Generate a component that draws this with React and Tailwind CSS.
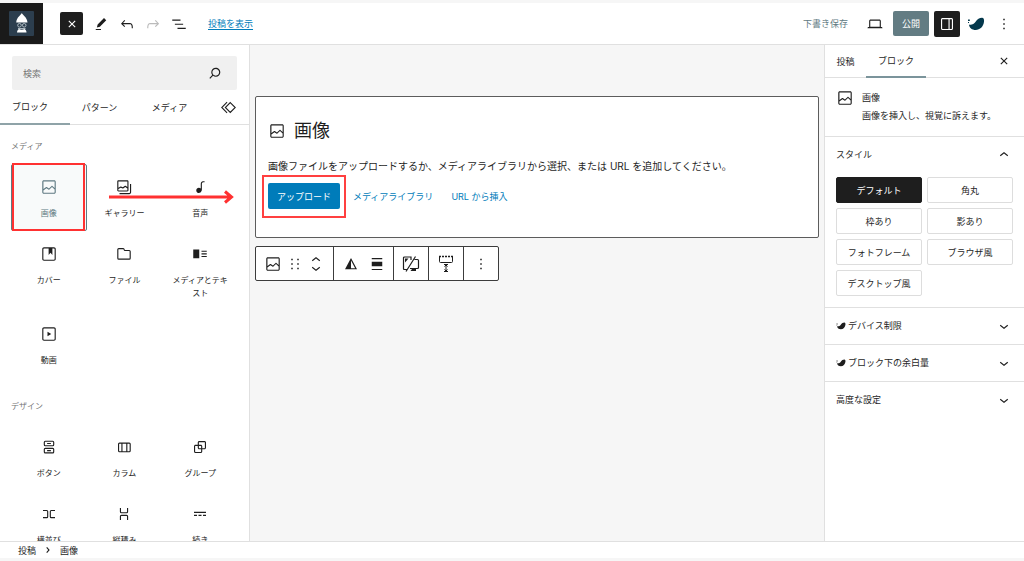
import React from 'react';

const ICONS = {
  image: 'M19 3H5c-1.1 0-2 .9-2 2v14c0 1.1.9 2 2 2h14c1.1 0 2-.9 2-2V5c0-1.1-.9-2-2-2zM5 4.5h14c.3 0 .5.2.5.5v8.4l-3-2.9c-.3-.3-.8-.3-1 0L11.9 14 9 12c-.3-.2-.6-.2-.8 0l-3.6 2.6V5c-.1-.3.1-.5.4-.5zm14 15H5c-.3 0-.5-.2-.5-.5v-2.4l4.1-3 3 1.9c.3.2.7.2.9-.1L16 12l3.5 3.4V19c0 .3-.2.5-.5.5z',
  gallery: 'M16.375 4.5H4.625a.125.125 0 0 0-.125.125v8.254l2.859-1.54a.75.75 0 0 1 .68-.016l2.384 1.142 2.89-2.074a.75.75 0 0 1 .874 0l2.313 1.66V4.625a.125.125 0 0 0-.125-.125Zm.125 9.398-2.75-1.975-2.813 2.02a.75.75 0 0 1-.76.067l-2.444-1.17L4.5 14.583v1.792c0 .069.056.125.125.125h11.75a.125.125 0 0 0 .125-.125v-2.477ZM4.625 3C3.728 3 3 3.728 3 4.625v11.75C3 17.273 3.728 18 4.625 18h11.75c.898 0 1.625-.727 1.625-1.625V4.625C18 3.728 17.273 3 16.375 3H4.625ZM20 8v11c0 .69-.31 1-.999 1H6v1.5h13.001c1.52 0 2.499-.982 2.499-2.5V8H20Z',
  audio: 'M17.7 4.3c-1.2 0-2.8 0-3.8 1-.6.6-.9 1.5-.9 2.6V14c-.6-.6-1.5-1-2.5-1C8.6 13 7 14.6 7 16.5S8.6 20 10.5 20c1.5 0 2.8-1 3.3-2.3.5-.8.7-1.8.7-2.5V7.9c0-.7.2-1.2.5-1.6.6-.6 1.8-.6 2.8-.6h.3V4.3h-.4z',
  cover: 'M18.7 3H5.3C4 3 3 4 3 5.3v13.4C3 20 4 21 5.3 21h13.4c1.3 0 2.3-1 2.3-2.3V5.3C21 4 20 3 18.7 3zm.8 15.7c0 .4-.4.8-.8.8H5.3c-.4 0-.8-.4-.8-.8V5.3c0-.4.4-.8.8-.8h6.2v8.9l2.5-3.1 2.5 3.1V4.5h2.2c.4 0 .8.4.8.8v13.4z',
  file: 'M12.848 8a1 1 0 0 1-.914-.594l-.723-1.63a.5.5 0 0 0-.447-.276H5a.5.5 0 0 0-.5.5v11.5a.5.5 0 0 0 .5.5h14a.5.5 0 0 0 .5-.5v-9A.5.5 0 0 0 19 8h-6.152Zm.612-1.5a.5.5 0 0 1-.462-.31l-.445-1.084A2 2 0 0 0 10.763 4H5a2 2 0 0 0-2 2v11.5a2 2 0 0 0 2 2h14a2 2 0 0 0 2-2v-9a2 2 0 0 0-2-2h-5.54Z',
  mediaText: 'M3 6v11.5h8V6H3Zm11 3h7V7.5h-7V9Zm7 3.5h-7V11h7v1.5ZM14 16h7v-1.5h-7V16Z',
  video: 'M18.7 3H5.3C4 3 3 4 3 5.3v13.4C3 20 4 21 5.3 21h13.4c1.3 0 2.3-1 2.3-2.3V5.3C21 4 20 3 18.7 3zm.8 15.7c0 .4-.4.8-.8.8H5.3c-.4 0-.8-.4-.8-.8V5.3c0-.4.4-.8.8-.8h13.4c.4 0 .8.4.8.8v13.4zM10 15l5-3-5-3v6z',
  buttons: 'M14.5 17.5h-5V16h5v1.5zM14.5 8h-5V6.5h5V8zM7 3.5h10a2 2 0 0 1 2 2V9a2 2 0 0 1-2 2H7a2 2 0 0 1-2-2V5.5a2 2 0 0 1 2-2zM17 5H7a.5.5 0 0 0-.5.5V9a.5.5 0 0 0 .5.5h10a.5.5 0 0 0 .5-.5V5.5A.5.5 0 0 0 17 5zM7 13h10a2 2 0 0 1 2 2v3.5a2 2 0 0 1-2 2H7a2 2 0 0 1-2-2V15a2 2 0 0 1 2-2zm10 1.5H7a.5.5 0 0 0-.5.5v3.5a.5.5 0 0 0 .5.5h10a.5.5 0 0 0 .5-.5V15a.5.5 0 0 0-.5-.5z',
  columns: 'M15 7.5h-5v10h5v-10Zm1.5 0v10H19a.5.5 0 0 0 .5-.5V8a.5.5 0 0 0-.5-.5h-2.5ZM6 7.5h2.5v10H6a.5.5 0 0 1-.5-.5V8a.5.5 0 0 1 .5-.5ZM6 6h13a2 2 0 0 1 2 2v9a2 2 0 0 1-2 2H6a2 2 0 0 1-2-2V8a2 2 0 0 1 2-2Z',
  group: 'M18 4h-7c-1.1 0-2 .9-2 2v3H6c-1.1 0-2 .9-2 2v7c0 1.1.9 2 2 2h7c1.1 0 2-.9 2-2v-3h3c1.1 0 2-.9 2-2V6c0-1.1-.9-2-2-2zm-4.5 14c0 .3-.2.5-.5.5H6c-.3 0-.5-.2-.5-.5v-7c0-.3.2-.5.5-.5h3V13c0 1.1.9 2 2 2h2.5v3zm0-4.5H11c-.3 0-.5-.2-.5-.5v-2.5H13c.3 0 .5.2.5.5v2.5zm5-.5c0 .3-.2.5-.5.5h-3V11c0-1.1-.9-2-2-2h-2.5V6c0-.3.2-.5.5-.5h7c.3 0 .5.2.5.5v7z',
  row: 'M4 6.5h5a2 2 0 0 1 2 2v7a2 2 0 0 1-2 2H4V16h5a.5.5 0 0 0 .5-.5v-7A.5.5 0 0 0 9 8H4V6.5Zm16 0h-5a2 2 0 0 0-2 2v7a2 2 0 0 0 2 2h5V16h-5a.5.5 0 0 1-.5-.5v-7A.5.5 0 0 1 15 8h5V6.5Z',
  stack: 'M17.5 4v5a2 2 0 0 1-2 2h-7a2 2 0 0 1-2-2V4H8v5a.5.5 0 0 0 .5.5h7A.5.5 0 0 0 16 9V4h1.5Zm0 16v-5a2 2 0 0 0-2-2h-7a2 2 0 0 0-2 2v5H8v-5a.5.5 0 0 1 .5-.5h7a.5.5 0 0 1 .5.5v5h1.5Z',
  more: 'M4 9v1.5h16V9H4zm12 5.5h4V13h-4v1.5zm-6 0h4V13h-4v1.5zm-6 0h4V13H4v1.5z',
  edit: 'm19 7-3-3-8.5 8.5-1 4 4-1L19 7Zm-7 11.5H5V20h7v-1.5Z',
  undo: 'M18.3 11.7c-.6-.6-1.4-.9-2.3-.9H6.7l2.9-3.3-1.1-1-4.5 5L8.5 16l1-1-2.7-2.7H16c.5 0 .9.2 1.3.5 1 1 1 3.4 1 4.5v.3h1.5v-.2c0-1.5 0-4.3-1.5-5.7z',
  redo: 'M15.6 6.5l-1.1 1 2.9 3.3H8c-.9 0-1.7.3-2.3.9-1.4 1.5-1.4 4.2-1.4 5.6v.2h1.5v-.3c0-1.1 0-3.5 1-4.5.3-.3.7-.5 1.3-.5h9.2L14.5 15l1.1 1.1 4.6-4.6-4.6-5z',
  listView: 'M3 6h11v1.5H3V6Zm3.5 5.5h11V13h-11v-1.5ZM21 17H10v1.5h11V17Z',
  close: 'M12 13.06l3.712 3.713 1.061-1.06L13.061 12l3.712-3.712-1.06-1.06L12 10.938 8.288 7.227l-1.061 1.06L10.939 12l-3.712 3.712 1.06 1.061L12 13.061z',
  laptop: 'M20.5 16h-.7V8c0-1.1-.9-2-2-2H6.2c-1.1 0-2 .9-2 2v8h-.7c-.8 0-1.5.7-1.5 1.5h20c0-.8-.7-1.5-1.5-1.5zM5.7 8c0-.3.2-.5.5-.5h11.6c.3 0 .5.2.5.5v7.6H5.7V8z',
  drawer: 'M18 4H6c-1.1 0-2 .9-2 2v12c0 1.1.9 2 2 2h12c1.1 0 2-.9 2-2V6c0-1.1-.9-2-2-2zm-4 14.5H6c-.3 0-.5-.2-.5-.5V6c0-.3.2-.5.5-.5h8v13zm4.5-.5c0 .3-.2.5-.5.5h-2.5v-13H18c.3 0 .5.2.5.5v12z',
  dots: 'M13 19h-2v-2h2v2zm0-6h-2v-2h2v2zm0-6h-2V5h2v2z',
  search: 'M13 5c-3.3 0-6 2.7-6 6 0 1.4.5 2.7 1.3 3.7l-3.8 3.8 1.1 1.1 3.8-3.8c1 .8 2.3 1.3 3.7 1.3 3.3 0 6-2.7 6-6S16.3 5 13 5zm0 10.5c-2.5 0-4.5-2-4.5-4.5s2-4.5 4.5-4.5 4.5 2 4.5 4.5-2 4.5-4.5 4.5z',
  drag: 'M7 7h2V5H7v2zm0 6h2v-2H7v2zm0 6h2v-2H7v2zm8-14v2h2V5h-2zm0 8h2v-2h-2v2zm0 6h2v-2h-2v2z',
  align: 'M19 5.5H5V4h14v1.5ZM19 20H5v-1.5h14V20ZM5 9h14v6H5V9Z',
  up: 'M6.5 12.4L12 8l5.5 4.4-.9 1.2L12 10l-4.5 3.6-1-1.2z',
  down: 'M17.5 11.6L12 16l-5.5-4.4.9-1.2L12 14l4.5-3.6 1 1.2z',
  right: 'M10.8 8l3.5 4-3.5 4-1.1-1 2.6-3-2.6-3 1.1-1z',
  duotone: 'M12 4 4 19h16L12 4zm0 3.2 5.5 10.3H12V7.2z',
};

const Icon = ({ name, className = '' }) => (
  <svg viewBox="0 0 24 24" className={`size-[18px] shrink-0 fill-current ${className}`} fillRule="evenodd" aria-hidden="true">
    <path d={ICONS[name]} />
  </svg>
);

const Whale = ({ className }) => (
  <svg viewBox="0 0 18 14" className={`shrink-0 fill-current ${className}`} aria-hidden="true">
    <path d="M2 7.500c2.500.6 5-.4 6.600-2.800C10.300 2 12.500.8 15 .8c1.800 0 2.300 1.800 2 4-.6 4.800-4 8.200-8.300 8.200C5 13 2.200 10.800 2 7.500z" />
    <path d="M1 2.500h1.800v1.600H1zM1 5h1v1H1z" />
  </svg>
);

const media = [
  ['image', '画像'],
  ['gallery', 'ギャラリー'],
  ['audio', '音声'],
  ['cover', 'カバー'],
  ['file', 'ファイル'],
  ['mediaText', 'メディアとテキスト'],
  ['video', '動画'],
];

const design = [
  ['buttons', 'ボタン'],
  ['columns', 'カラム'],
  ['group', 'グループ'],
  ['row', '横並び'],
  ['stack', '縦積み'],
  ['more', '続き'],
];

const styles = ['デフォルト', '角丸', '枠あり', '影あり', 'フォトフレーム', 'ブラウザ風', 'デスクトップ風'];

const Tile = ({ icon, label, active }) => (
  <button
    type="button"
    className={`flex h-[67px] flex-col items-center px-2 pt-[14px] ${
      active ? 'rounded-xs bg-[#f8fafa] text-[#5f7a82] outline-1 -outline-offset-1 outline-[#5f7a82]' : ''
    }`}
  >
    <Icon name={icon} />
    <span className="mt-[11px] text-[8px] leading-[13px]">{label}</span>
  </button>
);

const Header = () => (
  <header className="flex h-[42px] shrink-0 items-center border-b border-[#e0e0e0] bg-white">
    <a href="#dashboard" aria-label="ダッシュボード" className="flex h-full w-[43px] items-center justify-center bg-[#1a1a1a]">
      <svg viewBox="0 0 25 25" className="size-[25px]" aria-hidden="true">
        <rect width="25" height="25" rx="1" fill="#2c3e4e" />
        <path d="M12.8 2c.7 2 5.200 4 5.700 9.500H7.200C7.700 6 12.100 4 12.800 2z" fill="#fff" />
        <g fill="none" stroke="#b9c4ca" strokeWidth=".9">
          <circle cx="10.500" cy="14.300" r="1.800" />
          <circle cx="15.200" cy="14.300" r="1.800" />
          <path d="M9 17.500h7.500" />
        </g>
        <path d="M8 21.500c0-2 1-3 2-3.500 1.500 1 4 1 5.500 0 1 .5 2 1.500 2 3.500z" fill="#fff" />
      </svg>
    </a>
    <button type="button" aria-label="ブロック挿入ツールを閉じる" className="ml-[17px] flex size-[23px] items-center justify-center rounded-xs bg-[#1e1e1e] text-white">
      <Icon name="close" />
    </button>
    <div className="ml-[9px] flex items-center gap-2">
      <button type="button" aria-label="ツール"><Icon name="edit" /></button>
      <button type="button" aria-label="元に戻す"><Icon name="undo" /></button>
      <button type="button" aria-label="やり直す" className="text-[#bbb]"><Icon name="redo" /></button>
      <button type="button" aria-label="リスト表示"><Icon name="listView" /></button>
    </div>
    <a href="#view" className="ml-5 text-[#007cba] underline underline-offset-2">投稿を表示</a>
    <div className="ml-auto flex items-center pr-[11px]">
      <button type="button" className="text-[#5f7a82]">下書き保存</button>
      <button type="button" aria-label="表示" className="ml-[18px]"><Icon name="laptop" /></button>
      <button type="button" className="ml-[9px] h-[25px] w-9 rounded-xs bg-[#637c83] text-white">公開</button>
      <button type="button" aria-label="設定" className="ml-[5px] flex size-[26px] items-center justify-center rounded-xs bg-[#1e1e1e] text-white">
        <Icon name="drawer" />
      </button>
      <button type="button" aria-label="追加設定" className="ml-[7px] text-[#04384c]"><Whale className="h-[14px] w-[18px]" /></button>
      <button type="button" aria-label="オプション" className="ml-[10px]"><Icon name="dots" /></button>
    </div>
  </header>
);

const Inserter = () => (
  <aside className="relative flex w-[250px] shrink-0 flex-col border-r border-[#e0e0e0] bg-white">
    <div className="px-3 pt-[11px]">
      <div className="flex h-[34px] items-center rounded-xs bg-[#f0f0f0] pr-[13px] pl-[11px]">
        <input type="search" aria-label="検索" placeholder="検索" className="min-w-0 flex-1 bg-transparent outline-none placeholder:text-[#757575]" />
        <Icon name="search" />
      </div>
    </div>
    <div role="tablist" className="flex h-[35px] shrink-0 border-b border-[#e0e0e0]">
      <button type="button" role="tab" aria-selected="true" className="-mb-px w-[70px] border-b-2 border-[#8fa3a8] pr-[10px]">ブロック</button>
      <button type="button" role="tab" aria-selected="false" className="w-[70px] pr-[11px]">パターン</button>
      <button type="button" role="tab" aria-selected="false" className="w-[70px] pr-[11px]">メディア</button>
      <button type="button" aria-label="パターンエクスプローラー" className="ml-auto pr-3">
        <svg viewBox="0 0 24 24" className="size-[17px]" fill="none" stroke="currentColor" strokeWidth="1.5" aria-hidden="true">
          <path d="M14.500 5 21.500 12l-7 7-7-7 7-7zM10 4.500 2.500 12l7.500 7.500" />
        </svg>
      </button>
    </div>
    <div className="min-h-0 flex-1 overflow-hidden px-[11px]">
      <h2 className="pt-[15px] text-[8px] leading-[12px] text-[#757575]">メディア</h2>
      <div className="mt-3 grid grid-cols-3">
        {media.map(([icon, label], i) => (
          <div key={label} className={i < 3 ? 'h-[67px]' : 'h-[80px]'}>
            <div className="grid"><Tile icon={icon} label={label} active={i === 0} /></div>
          </div>
        ))}
      </div>
      <h2 className="mt-[9px] text-[8px] leading-[12px] text-[#757575]">デザイン</h2>
      <div className="mt-3 grid grid-cols-3">
        {design.map(([icon, label]) => <Tile key={label} icon={icon} label={label} />)}
      </div>
    </div>
    {/* callout frame and drag arrow over the tiles */}
    <div className="pointer-events-none absolute top-[118px] left-[12px] h-[68px] w-[73px] border-2 border-[#ff3131]" />
    <svg viewBox="0 0 125 14" className="pointer-events-none absolute top-[145px] left-[109px] h-[14px] w-[125px]" fill="none" stroke="#ff3131" strokeWidth="3" aria-hidden="true">
      <path d="M0 7h122M116 1.500l6.500 5.500-6.500 5.500" />
    </svg>
  </aside>
);

const Canvas = () => (
  <main className="min-w-0 flex-1 px-[5px] pt-[51px]">
    <section className="h-[142px] rounded-xs border border-[#5c5c5c] bg-white px-3 pt-[23px]">
      <h1 className="flex items-center gap-2 text-[18px] leading-[22px]">
        <Icon name="image" />
        画像
      </h1>
      <p className="mt-[17px] text-[10px] leading-[14px]">画像ファイルをアップロードするか、メディアライブラリから選択、または URL を追加してください。</p>
      <div className="mt-[10px] flex items-center text-[#007cba]">
        <div className="relative">
          <button type="button" className="h-[26px] w-[72px] rounded-xs bg-[#007cba] text-white">アップロード</button>
          <div className="pointer-events-none absolute -inset-x-[6px] -top-2 -bottom-[9px] border-2 border-[#ff4040]" />
        </div>
        <button type="button" className="ml-[13px]">メディアライブラリ</button>
        <button type="button" className="ml-[18px]">URL から挿入</button>
      </div>
    </section>
    <div role="toolbar" aria-label="ブロックツール" className="mt-2 flex h-[35px] w-fit divide-x divide-[#3c3c3c] rounded-xs border border-[#3c3c3c] bg-white">
      <div className="flex w-[78px] items-center pl-2">
        <button type="button" aria-label="画像"><Icon name="image" /></button>
        <button type="button" aria-label="ドラッグ" className="ml-1"><Icon name="drag" /></button>
        <div className="ml-[3px] flex flex-col">
          <button type="button" aria-label="上に移動" className="h-[13px] overflow-hidden"><Icon name="up" /></button>
          <button type="button" aria-label="下に移動" className="flex h-[13px] items-end overflow-hidden"><Icon name="down" /></button>
        </div>
      </div>
      <div className="flex w-[60px] items-center justify-center gap-2">
        <button type="button" aria-label="デュオトーン"><Icon name="duotone" /></button>
        <button type="button" aria-label="配置"><Icon name="align" /></button>
      </div>
      <button type="button" aria-label="デバイス制限" className="flex w-[35px] items-center justify-center">
        <svg viewBox="0 0 18 18" className="size-[18px]" fill="none" stroke="currentColor" strokeWidth="1.2" aria-hidden="true">
          <path d="M5 14.500H2.500q-1 0-1-1V3q0-1 1-1h6.500v3M12.500 4.500h3q1 0 1 1v7q0 1-1 1H8M13.500 1.500 4 16.500" />
          <path d="M10 14h4v2H8.500zM3 3.500h3.500L3 7.500z" fill="currentColor" stroke="none" />
        </svg>
      </button>
      <button type="button" aria-label="余白" className="flex w-[35px] items-center justify-center">
        <svg viewBox="0 0 18 18" className="size-[18px]" fill="none" stroke="currentColor" aria-hidden="true">
          <path d="M2.500 1.500v5q0 1 1 1h11q1 0 1-1v-5M9 9.500v7M7 9.500h4M7 16.500h4" />
          <path d="M7.500 11.500 9 10l1.500 1.500M7.500 14.500 9 16l1.500-1.500" />
          <path d="M2 1.500h14" strokeDasharray="2 1" strokeWidth="1.500" />
        </svg>
      </button>
      <button type="button" aria-label="オプション" className="flex w-[34px] items-center justify-center"><Icon name="dots" /></button>
    </div>
  </main>
);

const Panel = ({ title, whale, open }) => (
  <button type="button" aria-expanded={!!open} className="flex h-9 w-full items-center pr-[11px] pb-px pl-[11px] text-left">
    {whale && <Whale className="mr-[2px] h-[8px] w-[10px]" />}
    {title}
    <Icon name={open ? 'up' : 'down'} className="ml-auto" />
  </button>
);

const Sidebar = () => (
  <aside className="w-[200px] shrink-0 border-l border-[#e0e0e0] bg-white">
    <div role="tablist" className="flex h-[33px] items-stretch border-b border-[#e0e0e0]">
      <button type="button" role="tab" aria-selected="false" className="w-[41px]">投稿</button>
      <button type="button" role="tab" aria-selected="true" className="-mb-px w-[60px] border-b-2 border-[#7b949b]">ブロック</button>
      <button type="button" aria-label="設定を閉じる" className="ml-auto pr-[11px]"><Icon name="close" /></button>
    </div>
    <div className="flex h-[59px] gap-2 border-b border-[#e0e0e0] pt-[11px] pl-[11px]">
      <Icon name="image" />
      <div className="leading-[18px]">
        <h2>画像</h2>
        <p>画像を挿入し、視覚に訴えます。</p>
      </div>
    </div>
    <section className="border-b border-[#e0e0e0]">
      <Panel title="スタイル" open />
      <div className="grid grid-cols-2 gap-[5px] px-[11px] pt-1 pb-[11px]">
        {styles.map((label, i) => (
          <button
            key={label}
            type="button"
            className={`h-[26px] rounded-xs border ${i === 0 ? 'border-[#1e1e1e] bg-[#1e1e1e] text-white' : 'border-[#ddd]'}`}
          >
            {label}
          </button>
        ))}
      </div>
    </section>
    <section className="border-b border-[#e0e0e0]"><Panel title="デバイス制限" whale /></section>
    <section className="border-b border-[#e0e0e0]"><Panel title="ブロック下の余白量" whale /></section>
    <section><Panel title="高度な設定" /></section>
  </aside>
);

export default function App() {
  return (
    <div
      lang="ja"
      className="flex h-screen flex-col bg-[#f6f6f6] py-[3px] font-['Inter','Noto_Sans_CJK_JP',sans-serif] text-[9px] leading-[13px] text-[#1e1e1e]"
    >
      <Header />
      <div className="flex min-h-0 flex-1 overflow-hidden">
        <Inserter />
        <Canvas />
        <Sidebar />
      </div>
      <footer className="flex h-[17px] shrink-0 items-center border-t border-[#e0e0e0] bg-white pl-[18px]">
        <a href="#post">投稿</a>
        <Icon name="right" className="mx-[3px]" />
        <span>画像</span>
      </footer>
    </div>
  );
}
